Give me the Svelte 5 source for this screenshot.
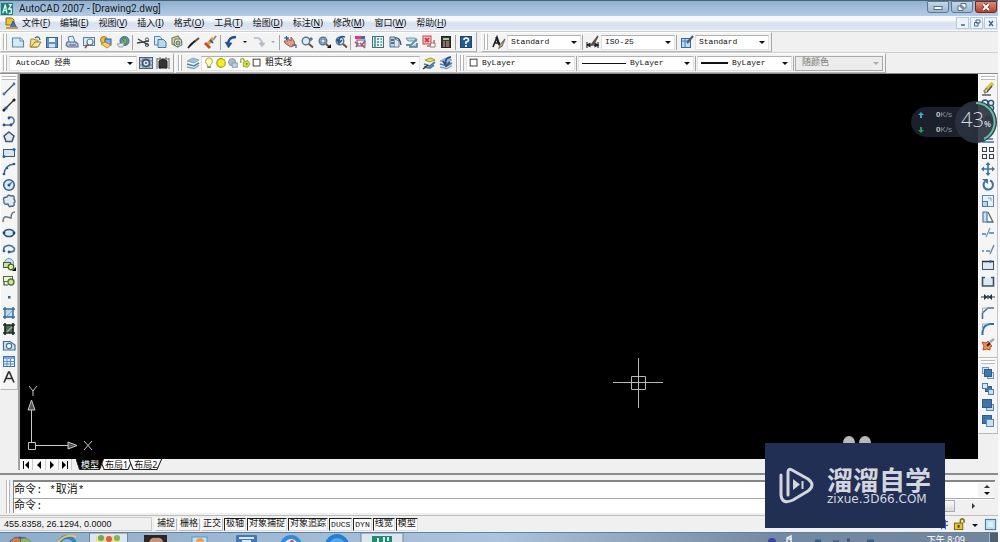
<script>
  const p = (d, stroke = '#2f5f93', w = 1.2, fill = 'none') =>
    `<path d="${d}" stroke="${stroke}" stroke-width="${w}" fill="${fill}"/>`;
  const r = (x, y, w, h, fill, stroke = 'none') =>
    `<rect x="${x}" y="${y}" width="${w}" height="${h}" fill="${fill}" stroke="${stroke}"/>`;
  const c = (x, y, rad, fill, stroke = 'none', w = 1) =>
    `<circle cx="${x}" cy="${y}" r="${rad}" fill="${fill}" stroke="${stroke}" stroke-width="${w}"/>`;

  const lens = c(6, 6, 3.8, '#dcebf7', '#5b7591', 1.4) + p('M9 9L13 12.5', '#6b4f3a', 2);
  const stack = p('M1 5L7 2L13 4L8 7Z', '#6f95bb', 0.7, '#9fc0dd') + p('M1 8L8 10L13 7', '#4f81ac', 1.5) + p('M1 11L8 12.5L13 9.5', '#7fa3c4', 1.4);

  const icons = {
    app: r(0, 0, 14, 14, '#1c7f71') + p('M2 12L5 2L7 12M3 9H6M9 2H12L9 7H12V12H9', '#e4fff6', 1.5),
    doc: p('M1 9V2H7L9 4V9Z', '#8b6a22', 1, '#f3c02f') + p('M5 12L8 5L12 12Z', '#2b59b0', 1, '#3f78d0') + p('M1 12H13', '#d39a22', 2),
    new: p('M1.5 3H9.5L12.5 6V12H1.5Z', '#5d8bab', 1.1, '#d3ebf7') + p('M9 3V6H12', '#5d8bab', 1, '#fff'),
    open: p('M2 12L3 4H6L7 5H10L9 12Z', '#a58a35', 1, '#f2df8e') + p('M3 12L7 7H13L10 12Z', '#94782a', 1, '#f7e8a0') + p('M7 3Q11 0 12 5', '#555', 1.3),
    save: r(1.5, 2.5, 11, 10, '#5c94c5', '#33658f') + r(4, 3, 6, 4, '#eef6fb') + r(4, 9, 6, 3.5, '#d7e3ec'),
    plot: p('M4 7L3 2L8 1L10 7', '#5a7fae', 1, '#e2edfa') + p('M2 7H11L13 9V12H3L1 10Z', '#56699b', 1.1, '#bccbe4') + p('M4 10H11', '#57688d', 1.2),
    preview: r(1.5, 2.5, 11, 8, '#d8e9f7', '#587ca3') + c(8, 7, 3, '#f1f8ff', '#5d7d9c', 1.2) + p('M6 9L3 13', '#8b6332', 1.8),
    publish: c(5, 5, 3.5, '#f0bf2c', '#97801f') + r(6, 4, 6, 6, '#7badf0', '#345b9a') + p('M2 9L8 13L12 10L6 7Z', '#a78328', 0.9, '#ffd25b'),
    web: c(8.5, 6, 4.5, '#5a95c9', '#316893') + p('M6 4L8 6L7 8L10 9L11 5L9 3Z', '#528b33', 1, '#78b64e') + p('M1 9L8 8L7 12H3Z', '#99a6ad', 1, '#e4e8ea'),
    cut: p('M2 4L12 10M1 8L13 6', '#38454e', 1.4) + c(11, 4.5, 1.6, 'none', '#45525c') + c(11, 10, 1.6, 'none', '#45525c'),
    copy: p('M1.5 1.5H7L9 4V10H1.5Z', '#5788ad', 1, '#d4e9f6') + p('M5 4.5H10.5L13 7V12.5H5Z', '#487a9f', 1, '#b7d9ed'),
    paste: p('M2 3L8 1L12 7L8 12L2 9Z', '#827f45', 1.1, '#ded899') + p('M5 4H11L12 10L7 12L4 9Z', '#5b7384', 1, '#e2edf2') + c(8, 8, 2, '#b5c77a', '#65763c'),
    brush: p('M12 3L7 7', '#6b4f38', 2.2) + p('M8 6L3 11L1 13L4 9Z', '#222', 1.6, '#444'),
    paint: p('M12 1L9 5', '#8c8a87', 2) + p('M9 3L4 9', '#dc9a42', 3.2) + p('M1 8L6 13', '#ba5626', 2.8) + p('M6 5L9 8', '#31628c', 1.8),
    undo: p('M12 2Q4 2 4 10', '#234f91', 2.4) + p('M1 7L4.5 13L8 8Z', '#234f91', 0.5, '#234f91'),
    redo: p('M2 3Q10 2 10 9', '#bbc1c8', 2) + p('M7 8L10 12L13 8Z', '#b3bbc4', 0.5, '#b3bbc4'),
    pan: p('M3 2L8 6V2L11 6L12 10L8 12L3 9L1 6H5Z', '#9e5547', 1, '#d8a08a') + p('M1 3H6M3.5 1V5M9 10H13V13', '#365c88', 1.2),
    zoom: lens + p('M11 2V6M9 4H13', '#38546f', 1),
    zoomwin: lens + p('M4 4H8V8H4Z', '#3e6899', 1) + p('M10 13H14V9Z', '#111', 0, '#111'),
    zoomprev: lens + p('M11 2Q5 0 5 6M3 4L5 8L8 5', '#23578f', 1.7),
    props: r(1, 1, 3, 3, '#d02bcc') + r(4, 1, 3, 3, '#ef4a32') + r(7, 1, 4, 3, '#3867d4') + r(3, 5, 8, 6, '#ece8f0', '#665c94') + p('M1 7L4 9L2 12M6 8L11 13M11 6L7 11', '#a45b6c', 1.6),
    design: r(1.5, 1.5, 11, 11, '#e8f3f3', '#3e7186') + p('M4 1V13M6 4H8M9.5 4H11M6 7H8M9.5 7H11M6 10H8M9.5 10H11', '#3d8b84', 1.5),
    palette: p('M2 2H7V12H2Z', '#4a7092', 1, '#b7d3e2') + p('M7 4L11 6V12H7', '#567696', 1, '#dfedf4') + p('M7 3Q12 2 13 10M3 5H6M3 8H6', '#344e6c', 1.3),
    sheet: p('M1 3H10L12 6H3Z', '#6f9db5', 1, '#b8d9e1') + p('M12 4L6 10H1', '#63949d', 2) + p('M4 12H12V8', '#4e79a5', 1.5, '#a9c9e2'),
    markup: r(1, 1, 8, 8, '#f4c2c2', '#c34850') + p('M3 3L7 7M7 3L3 7', '#d12c38', 1.6) + p('M5 11H12V5', '#c8636a', 1.5) + p('M9 8H13V12H8Z', '#95747b', 1, '#fff'),
    calc: r(2.5, 1.5, 9, 11, '#3f3535', '#272222') + r(4, 3, 6, 2, '#93d48a') + p('M4 7H6M7 7H10M4 9H6M7 9H10M4 11H6M7 11H10', '#d9a4a0', 1.1),
    help: r(1.5, 1.5, 11, 11, '#285b91', '#17456f') + p('M5 5Q5 3 7 3Q9.5 3 9.5 5Q9.5 6.5 7 7V9M7 10V12', '#fff', 1.6),
    textstyle: p('M1 12L5 2L8 11M3 8H8M4 2L7 10', '#222', 1.6) + p('M13 4L8 10L7 13L10 11Z', '#82745f', 1.2, '#e0d4bc'),
    dimstyle: p('M1 7V13M1 10H13M12 7V13M1 10L4 8.5V11.5ZM12 10L9 8.5V11.5Z', '#222', 1.1, '#222') + p('M12 1L5 10L8 9Z', '#5b5148', 1.4, '#333'),
    tabstyle: r(1.5, 3.5, 9, 9, '#bedcf4', '#356aa5') + p('M2 6H10M5 4V12', '#4b80b8', 1) + p('M13 1L7 8', '#4b5d70', 2.2),
    gear: r(0.5, 1.5, 13, 11, '#b8c8d7', '#476078') + p('M0 5H14M0 9H14M4 1V13M10 1V13', '#607b93', 1) + c(7, 7, 3.5, '#d9e5ee', '#3b536b', 1.8) + c(7, 7, 1, '#3b536b'),
    workspace: p('M1 2V13M4 1V13M10 1V13M13 2V13M1 3H13', '#676767', 1) + p('M3 5L7 3L11 5V12H3Z', '#222', 1, '#333'),
    layers: stack,
    bulb: p('M7 1Q11 1 11 5Q11 7 9 9V11H5V9Q3 7 3 5Q3 1 7 1Z', '#a39a3d', 1, '#fffbb3') + p('M5 12H9', '#6684a0', 1.8),
    sun: c(7, 7, 5, '#f1ed28', '#b3a519', 1.4),
    freeze: c(6, 6, 4.2, '#a9bfcb', '#7794a5') + r(6, 7, 6, 5, '#c3d4dc', '#7f98a5'),
    lock: p('M2 7V4Q2 2 4 2Q6 2 6 5', '#94a724', 1.5) + p('M5 6L10 4L13 8L10 12L5 11Z', '#8e9d22', 1, '#d5dc48') + c(9, 8, 1, '#65701b'),
    swatch: r(2.5, 2.5, 8, 8, '#fff', '#222'),
    layerprev: p('M3 4L9 2L13 4L7 6Z', '#a49a34', 1, '#e5de5c') + p('M2 8L8 10L13 6M2 11L8 12L12 9', '#4d7ea9', 1.8) + p('M1 13L6 9', '#333', 1.2),
    layerstate: stack + p('M12 1Q5 2 7 8M4 5L7 10L11 6', '#2c5084', 1.8),
    line: p('M2 12L12 2', '#3c4d5b', 1.3) + c(2, 12, 1.4, '#3e79b5') + c(12, 2, 1.4, '#3e79b5'),
    xline: p('M1 13L13 1', '#333', 1.4) + c(4, 10, 1.6, '#235e9b') + c(12, 2, 1.5, '#222') + c(2, 12, 1.5, '#222'),
    pline: p('M1 11H9M9 11Q14 8 11 4Q9 2 7 4', '#487199', 1.4) + c(2, 11, 1.4, '#1e5288') + c(7, 4, 1.4, '#1e5288') + c(9, 11, 1.4, '#1e5288'),
    polygon: p('M7 2L12 6L10 11.5H4L2 6Z', '#445a6d', 1.6, '#dceaf5'),
    rectangle: r(1.5, 3.5, 11, 7, '#d5e7f6', '#3e5870') + c(2, 10.5, 1.6, '#236aab') + c(12, 3.5, 1.6, '#236aab'),
    arc: p('M2 12Q3 3 12 2', '#4c6781', 1.4) + c(2, 12, 1.3, '#205c98') + c(5, 6, 1.3, '#205c98') + c(12, 2, 1.3, '#205c98'),
    circle: c(7, 7, 5.3, '#d9eaf7', '#36648d', 1.6) + p('M7 7L10 4', '#3f81bc', 1.4) + c(7, 7, 1.5, '#245d95'),
    cloud: p('M5 3Q6 0 9 2Q13 1 12 5Q14 8 12 9Q13 13 9 12Q7 14 6 10Q1 11 2 7Q0 3 5 3Z', '#506a83', 1.4, '#dfeaf4'),
    spline: p('M1 12Q1 6 5 7T9 8Q9 2 13 2', '#6c7680', 1.5),
    ellipse: '<ellipse cx="7" cy="7" rx="5" ry="3.5" fill="#dbeaf6" stroke="#285987" stroke-width="1.700"/>' + c(2, 7, 1.4, '#16456f') + c(12, 7, 1.4, '#16456f'),
    earc: p('M7 10Q14 10 12 6Q9 2 4 4Q1 5 2 9', '#4576a1', 1.7) + c(7, 10, 1.4, '#205c98') + c(2, 9, 1.3, '#205c98'),
    insert: c(7, 5, 4.5, '#c9dff0', '#6c94b3') + r(1.5, 4.5, 7, 5, '#cfe0a1', '#426228') + c(9, 9, 2.8, '#dae7b1', '#446b25', 1.3) + p('M10 13H14V9Z', '#111', 0, '#111'),
    block: r(1.5, 2.5, 9, 5, '#eff5d8', '#516d33') + c(9, 8, 3, '#cddf9b', '#4f742e', 1.3) + p('M2 8V11H6', '#345b37'),
    point: r(6, 6, 2.5, 2.5, '#33658f'),
    hatch: r(3.5, 3.5, 8, 8, '#b8daf2') + p('M3 1V13M11 1V13M1 3H13M1 11H13', '#356995', 1.4) + p('M5 10L10 5', '#7ba7cb', 1),
    gradient: r(3, 3, 8, 8, '#526656') + p('M3 1V13M11 1V13M1 3H13M1 11H13', '#202b28', 1.7) + p('M5 10L10 5', '#98ad9b', 1.6),
    region: p('M1.5 12V3.5H8L13 7V12Z', '#427098', 1.2, '#cde3f2') + c(7, 8, 2.6, '#fff', '#3e77a5', 1.2),
    table: r(1.5, 2.5, 11, 10, '#e6f1fb', '#3f75b8') + r(2, 3, 10, 2, '#7ca9e0') + p('M2 7.5H12M2 10H12M5 5V12M8.5 5V12', '#5b8dcb', 1),
    text: p('M2 12.5L6.6 2H7.4L12 12.5M4 8.5H10', '#2f2f2f', 1.7),
    erase: p('M12 1L5 8', '#d6c549', 4) + p('M11 4L6 10L3 11', '#4d4c45', 1.3) + p('M6 6L3 9L5 11', '#8d8676', 1.4, '#e8e2d0') + p('M1 13H10', '#444', 1.3),
    duplicate: c(4, 5, 3, '#d2e7f5', '#2c536d', 1.4) + c(10, 5, 2.6, '#dbecf7', '#2c536d', 1.4) + c(10, 10, 2.6, '#b9d6ea', '#315b80', 1.4),
    mirror: p('M6 2V12H1Z', '#315c84', 1.2) + p('M8 2V12H13Z', '#315c84', 1.2, '#c8dff0'),
    offset: p('M1 12H13M2 9H12', '#466fa8', 1.6),
    array: ['1.5 1.5', '8.5 1.5', '1.5 8.5', '8.5 8.5'].map((s) => { const [x, y] = s.split(' '); return r(x, y, 4, 4, '#f4f7fa', '#3a434b'); }).join(''),
    move: p('M7 2V12M2 7H12', '#3f79ae', 1.7) + p('M7 0L9.5 3H4.5ZM7 14L9.5 11H4.5ZM0 7L3 4.5V9.5ZM14 7L11 4.5V9.5Z', '#3f79ae', 0, '#3970a5'),
    rotate: p('M4 3.5A4.7 4.7 0 1 0 9 2.5', '#3e709b', 2) + p('M1 1H7V6Z', '#3e709b', 0, '#3e709b'),
    scale: r(1.5, 1.5, 11, 11, '#e6f1fa', '#5e88af') + r(1.5, 7.5, 5, 5, '#bad6ec', '#477aa7') + p('M7 4H10V7', '#7fa2c2', 1),
    stretch: p('M2 2V12H6V2Z', '#41719d', 1.1, '#cce1f1') + p('M7 2L12 12H6', '#526b80', 1.3),
    trim: p('M1 8H5M8 7H13', '#3c83bd', 1.5) + p('M5 11L9 2', '#7293ad', 1.2),
    extend: p('M1 9H3M5 9H9', '#4e86b4', 1.4) + p('M9 12L13 3', '#61829d', 1.3),
    breakpt: r(1.5, 3.5, 11, 8, '#dce9f4', '#42566a') + p('M1 3.500H13', '#27343d', 1.5) + c(9.5, 3.5, 1.3, '#2b6090'),
    breakln: p('M4 3.5H1.5V12H12.5V3.5H10', '#3d5266', 1.6, '#dce9f4'),
    join: p('M0 7H14M7 5V9', '#29343d', 1.2) + p('M6.5 7L3 4V10ZM7.5 7L11 4V10Z', '#29343d', 0, '#29343d'),
    chamfer: p('M1.5 13V7L7 2H13', '#4c6f8c', 1.6) + p('M1.5 7V2H7', '#93aabd', 1),
    fillet: p('M1.5 13V10Q2 3 9 2H13', '#316fa7', 2) + p('M1.5 8V2H7', '#93aabd', 1),
    explode: p('M1 4L5 5L7 3L9 6L11 8L9 9L9 12L6 11L2 12L3 8Z', '#c44320', 1, '#ec9650') + p('M6 8L9 5', '#222', 1.8) + p('M9 4L13 1', '#9aa7b2', 2.2),
    front: r(1.5, 1.5, 6, 6, '#d2e4f3', '#6e96b9') + r(6.5, 6.5, 6, 6, '#d2e4f3', '#6e96b9') + r(3.5, 3.5, 7, 7, '#3f76ad', '#315f8d'),
    back: r(4.5, 4.5, 6, 5, '#3f76ad', '#315f8d') + r(1.5, 1.5, 5, 5, '#d5e7f5', '#547fa7') + r(7.5, 7.5, 5, 5, '#c7dff0', '#547fa7'),
    above: r(5.5, 6.5, 7, 6, '#c2daee', '#5c86ad') + r(1.5, 1.5, 9, 8, '#3f74ab', '#2d5e90'),
    under: r(1.5, 1.5, 9, 8, '#3f74ab', '#2d5e90') + r(5.5, 5.5, 7, 7, '#c8e0f1', '#5c86ad'),
    tray: p('M2 4H12M2 8H12M5 2V12M9 2V12', '#3c62b4', 1.4),
    padlock: p('M8 6V3Q8 1 10 1Q12 1 12 4V5', '#8a7418', 1.8) + r(1.5, 5.5, 9, 7, '#e5c42d', '#775f0c') + r(5, 7.5, 2, 3, '#4d3c00'),
    clean: r(1.5, 1.5, 11, 11, '#b9ddf4', '#3e7198') + r(4, 4, 6, 6, '#d8effc')
  };

  const menus = [['文件', 'F'], ['编辑', 'E'], ['视图', 'V'], ['插入', 'I'], ['格式', 'O'], ['工具', 'T'], ['绘图', 'D'], ['标注', 'N'], ['修改', 'M'], ['窗口', 'W'], ['帮助', 'H']];
  const standard = [
    [['new', '新建'], ['open', '打开'], ['save', '保存']],
    [['plot', '打印'], ['preview', '打印预览'], ['publish', '发布'], ['web', '网上发布']],
    [['cut', '剪切'], ['copy', '复制'], ['paste', '粘贴'], ['brush', '特性匹配'], ['paint', '块编辑器']],
    [['undo', '放弃'], ['drop', '放弃列表'], ['redo', '重做'], ['dropoff', '重做列表']],
    [['pan', '实时平移'], ['zoom', '实时缩放'], ['zoomwin', '窗口缩放'], ['zoomprev', '缩放上一个']],
    [['props', '特性'], ['design', '设计中心'], ['palette', '工具选项板'], ['sheet', '图纸集'], ['markup', '标记集'], ['calc', '快速计算器']],
    [['help', '帮助']]
  ];
  const styles = [['textstyle', '文字样式', 'Standard'], ['dimstyle', '标注样式', 'ISO-25'], ['tabstyle', '表格样式', 'Standard']];
  const draw = [['line', '直线'], ['xline', '构造线'], ['pline', '多段线'], ['polygon', '正多边形'], ['rectangle', '矩形'], ['arc', '圆弧'], ['circle', '圆'], ['cloud', '修订云线'], ['spline', '样条曲线'], ['ellipse', '椭圆'], ['earc', '椭圆弧'], ['insert', '插入块'], ['block', '创建块'], ['point', '点'], ['hatch', '图案填充'], ['gradient', '渐变色'], ['region', '面域'], ['table', '表格'], ['text', '多行文字']];
  const modify = [['erase', '删除'], ['duplicate', '复制'], ['mirror', '镜像'], ['offset', '偏移'], ['array', '阵列'], ['move', '移动'], ['rotate', '旋转'], ['scale', '缩放'], ['stretch', '拉伸'], ['trim', '修剪'], ['extend', '延伸'], ['breakpt', '打断于点'], ['breakln', '打断'], ['join', '合并'], ['chamfer', '倒角'], ['fillet', '圆角'], ['explode', '分解']];
  const order = [['front', '前置'], ['back', '后置'], ['above', '置于对象之上'], ['under', '置于对象之下']];
  const tabs = ['模型', '布局1', '布局2'];
  let tab = $state('模型');
  let modes = $state([['捕捉', false], ['栅格', false], ['正交', false], ['极轴', true], ['对象捕捉', true], ['对象追踪', true], ['DUCS', true], ['DYN', true], ['线宽', true], ['模型', true]]);
</script>

{#snippet icon(name)}
  <svg class="icon" viewBox="0 0 14 14" aria-hidden="true">{@html icons[name]}</svg>
{/snippet}

{#snippet tool([name, label])}
  {#if name.startsWith('drop')}
    <button class="tool narrow" class:off={name === 'dropoff'} aria-label={label}><i class="tri"></i></button>
  {:else}
    <button class="tool" aria-label={label}>{@render icon(name)}</button>
  {/if}
{/snippet}

<div class="window">
  <header class="titlebar">
    {@render icon('app')}
    <h1>AutoCAD 2007 - [Drawing2.dwg]</h1>
    <div class="winbtns">
      <button aria-label="最小化"><svg viewBox="0 0 20 10"><rect x="6" y="4.500" width="8" height="3" fill="#fff" stroke="#546b84"/></svg></button>
      <button aria-label="还原"><svg viewBox="0 0 20 10"><path d="M9 1.500H14V6H9ZM6 4H11V8.500H6Z" fill="#fff" stroke="#546b84"/></svg></button>
      <button class="close" aria-label="关闭"><svg viewBox="0 0 20 10"><path d="M7 2L13 8M13 2L7 8" stroke="#6b3029" stroke-width="3.500"/><path d="M7 2L13 8M13 2L7 8" stroke="#fff" stroke-width="2"/></svg></button>
    </div>
  </header>

  <nav class="menubar">
    {@render icon('doc')}
    {#each menus as [name, key]}
      <button>{name}(<u>{key}</u>)</button>
    {/each}
    <div class="docbtns">
      <button aria-label="最小化文档"><svg viewBox="0 0 10 10"><path d="M3 7H7" stroke="#45688d" stroke-width="1.500"/></svg></button>
      <button aria-label="还原文档"><svg viewBox="0 0 10 10"><path d="M4 2H8V5H4ZM2.500 4.500H6V8H2.500Z" fill="#e9f0f8" stroke="#45688d"/></svg></button>
      <button aria-label="关闭文档"><svg viewBox="0 0 10 10"><path d="M3 3L7 8M7 3L3 8" stroke="#45688d" stroke-width="1.500"/></svg></button>
    </div>
  </nav>

  <div class="bars">
    <div class="bar std">
      <i class="grip"></i>
      {#each standard as group, n}
        {#if n}<i class="sep"></i>{/if}
        {#each group as t}{@render tool(t)}{/each}
      {/each}
    </div>
    <div class="bar stylebar">
      <i class="grip"></i>
      {#each styles as [name, label, value], n}
        {#if n}<i class="sep"></i>{/if}
        {@render tool([name, label])}
        <label class="combo w-style"><select aria-label={label}><option>{value}</option></select></label>
      {/each}
    </div>
  </div>

  <div class="bars">
    <div class="bar">
      <i class="grip"></i>
      <label class="combo w-space"><select aria-label="工作空间"><option>AutoCAD 经典</option></select></label>
      {@render tool(['gear', '工作空间设置'])}
      {@render tool(['workspace', '我的工作空间'])}
    </div>
    <div class="bar layerbar">
      <i class="grip"></i>
      {@render tool(['layers', '图层特性管理器'])}
      <label class="combo w-layer">
        {#each ['bulb', 'sun', 'freeze', 'lock', 'swatch'] as n}{@render icon(n)}{/each}
        <select class="cjk" aria-label="图层"><option>粗实线</option></select>
      </label>
      {@render tool(['layerprev', '上一个图层'])}
      {@render tool(['layerstate', '图层状态'])}
    </div>
    <div class="bar">
      <i class="grip"></i>
      <label class="combo w-color">{@render icon('swatch')}<select aria-label="颜色"><option>ByLayer</option></select></label>
      <i class="sep"></i>
      <label class="combo w-type"><i class="sample thin"></i><select aria-label="线型"><option>ByLayer</option></select></label>
      <i class="sep"></i>
      <label class="combo w-weight"><i class="sample thick"></i><select aria-label="线宽"><option>ByLayer</option></select></label>
      <i class="sep"></i>
      <label class="combo w-plot disabled"><select class="cjk" aria-label="打印样式" disabled><option>随颜色</option></select></label>
    </div>
  </div>

  <main>
    <div class="dock">
      <div class="vbar">
        <i class="vgrip"></i>
        {#each draw as t}{@render tool(t)}{/each}
      </div>
    </div>
    <div class="drawing">
      <div class="canvas">
        <svg class="ucs" viewBox="0 0 80 80" role="img" aria-label="UCS">
          <g fill="none" stroke="#c9c9c9">
            <path d="M8.500 68.500H15.500V75.500H8.500ZM11.500 68V32M16 71.500H48"/>
            <path d="M11.500 26L15 36H8ZM57 71.500L48 68V75Z" fill="#555"/>
            <path d="M9 12L13 17L17 12M13 17V22M64 67L72 76M72 67L64 76"/>
          </g>
        </svg>
        <svg class="cursor" viewBox="0 0 50 50" aria-hidden="true">
          <path d="M25.500 0V50M0 24.500H50M18.500 18.500H32.500V31.500H18.500Z" fill="none" stroke="#b8b8b8"/>
        </svg>
      </div>
      <div class="tabs">
        <button class="step" aria-label="第一个"><svg viewBox="0 0 12 10"><path d="M3 1V9H4V1ZM9 1V9L5 5Z"/></svg></button>
        <button class="step" aria-label="上一个"><svg viewBox="0 0 12 10"><path d="M8 1V9L4 5Z"/></svg></button>
        <button class="step" aria-label="下一个"><svg viewBox="0 0 12 10"><path d="M4 1V9L8 5Z"/></svg></button>
        <button class="step" aria-label="最后一个"><svg viewBox="0 0 12 10"><path d="M3 1V9L7 5ZM8 1V9H9V1Z"/></svg></button>
        {#each tabs as name}
          <button class="tab" class:active={tab === name} onclick={() => (tab = name)}>
            <svg viewBox="0 0 32 11" preserveAspectRatio="none" aria-hidden="true"><path d="M0 0L4 10.500H27L31.500 0"/></svg>{name}
          </button>
        {/each}
      </div>
    </div>
    <div class="dock right">
      <div class="vbar">
        <i class="vgrip"></i>
        {#each modify as t}{@render tool(t)}{/each}
      </div>
      <div class="vbar">
        <i class="vgrip"></i>
        {#each order as t}{@render tool(t)}{/each}
      </div>
    </div>
    <aside class="netmeter">
      <div class="rates">
        <span><svg viewBox="0 0 6 6"><path d="M3 0L6 3H4V6H2V3H0Z" fill="#3ea5cf"/></svg><b>0</b>K/s</span>
        <span><svg viewBox="0 0 6 6"><path d="M3 6L6 3H4V0H2V3H0Z" fill="#2c9a48"/></svg><b>0</b>K/s</span>
      </div>
      <div class="dial">
        <svg viewBox="0 0 42 42" aria-hidden="true"><path d="M21 2A19 19 0 0 1 29 38" fill="none" stroke="#62c3a4" stroke-width="2"/></svg>
        <span>43<small>%</small></span>
      </div>
    </aside>
  </main>

  <section class="command">
    <i class="grip"></i>
    <div class="console">
      <div class="line history"><p>命令: *取消*</p><div class="vscroll"><i class="tri up"></i><i class="tri"></i></div></div>
      <div class="line">
        <label for="cmd">命令:</label><input id="cmd" type="text" />
        <div class="hscroll"><i class="thumb"></i><i class="tri next"></i></div>
      </div>
    </div>
  </section>

  <footer class="status">
    <output>455.8358, 26.1294, 0.0000</output>
    {#each modes as mode}
      <button class:on={mode[1]} class:latin={mode[0].startsWith('D')} aria-pressed={mode[1]} onclick={() => (mode[1] = !mode[1])}>{mode[0]}</button>
    {/each}
    <div class="tray">{@render icon('tray')}{@render icon('padlock')}<i class="tri"></i>{@render icon('clean')}</div>
  </footer>

  <div class="taskbar">
    <svg class="tasks" viewBox="0 0 420 10" aria-hidden="true">
      <circle cx="20" cy="17" r="14" fill="#44678a" stroke="#8eabc6" /><path d="M11 8Q15 3 20 6V10H11Z" fill="#df7446"/><path d="M21 6Q26 4 30 8V10H21Z" fill="#8bb45c"/>
      <circle cx="67" cy="12" r="8" fill="none" stroke="#3181ca" stroke-width="4"/><path d="M58 9Q66 0 76 4" fill="none" stroke="#e9c64a" stroke-width="2"/>
      <rect x="89.500" y="0" width="38" height="12" fill="#dde7ef" stroke="#6f879d"/><path d="M96 3H120V10H96Z" fill="#ebdca0"/><circle cx="101" cy="5" r="3" fill="#72a953"/><circle cx="109" cy="6" r="3" fill="#d75e4a"/><circle cx="117" cy="5" r="3" fill="#7fb55f"/>
      <rect x="144" y="2" width="23" height="8" fill="#2c2524"/><path d="M149 10Q150 4 156 5Q163 4 163 10Z" fill="#c5937c"/>
      <rect x="192" y="4" width="15" height="6" fill="#c9e1f2" stroke="#5199cb"/><circle cx="200" cy="9" r="4" fill="#e8a062"/>
      <rect x="236" y="2" width="21" height="8" rx="1" fill="#3f78bd"/><path d="M239 5H254M242 8H251" stroke="#d9eafa" stroke-width="2"/>
      <circle cx="291" cy="13" r="9" fill="#e1eaf2" stroke="#348bd7" stroke-width="4"/><circle cx="292" cy="9" r="2" fill="#dd4747"/>
      <circle cx="337" cy="13" r="10" fill="#5ba6e6" stroke="#247fd6" stroke-width="4"/>
      <rect x="361" y="0" width="42" height="12" fill="#dbe6ef" stroke="#6f879d"/><rect x="372" y="3" width="20" height="7" fill="#238773"/><path d="M378 10V5M384 4V10M388 4V8" stroke="#d5f1e9" stroke-width="2"/>
    </svg>
    <div class="notify">
      <svg viewBox="0 0 120 10" aria-hidden="true"><circle cx="5" cy="9" r="4" fill="#3444ab"/><path d="M20 10V5L24 3V10M21 6H25" fill="none" stroke="#eee" stroke-width="1.500"/><path d="M48 8H54M66 9H72M80 7H83M100 8H107" stroke="#3c5c7f" stroke-width="3"/></svg>
      <time>下午 8:09</time>
      <i class="peek"></i>
    </div>
  </div>

  <div class="ears"><i></i><i></i></div>
  <div class="brand">
    <svg viewBox="0 0 36 38" aria-hidden="true">
      <path d="M9 28V5Q9 1 13 3L29 12Q37 18 29 24L14 33Q3 38 2 28V8" fill="none" stroke="#d3d6de" stroke-width="3" stroke-linecap="round"/>
      <path d="M14 12L21 17.500L14 23Z" fill="#d3d6de"/><path d="M23.500 14V22" stroke="#d3d6de" stroke-width="2"/>
    </svg>
    <div><strong>溜溜自学</strong><span>zixue.3D66.COM</span></div>
  </div>
</div>

<style>
  :global(body) { margin: 0; }
  .window {
    position: relative;
    display: flex;
    flex-direction: column;
    min-height: 100vh;
    box-sizing: border-box;
    overflow: hidden;
    background: #f0f0f0;
    border-right: 2px solid #fafafa;
    color: #111;
    font: 9px/12px "Noto Sans", "Noto Sans CJK SC", sans-serif;
  }
  button { border: 0; margin: 0; padding: 0; background: none; color: inherit; font: inherit; display: flex; align-items: center; justify-content: center; }
  i { flex: none; }
  svg { display: block; flex: none; }
  .icon { width: 14px; height: 14px; }
  .tri { width: 0; height: 0; border: 3px solid transparent; border-top-color: #111; border-bottom: 0; }
  .tri.up { border-top: 0; border-bottom: 3px solid #333; }
  .tri.next { border: 3px solid transparent; border-left-color: #333; border-right: 0; }

  .titlebar { display: flex; align-items: center; gap: 6px; height: 16px; padding-left: 1px; box-sizing: border-box; border-top: 1px solid #4d6275; background: linear-gradient(#92b0cf, #b4cce5); }
  .titlebar .icon { width: 12px; height: 12px; }
  h1 { flex: 1; margin: 0; font: 10px/14px Roboto, "Noto Sans", sans-serif; color: #151c26; }
  .winbtns { display: flex; gap: 2px; align-self: flex-start; padding-right: 1px; }
  .winbtns button { width: 22px; height: 12px; box-sizing: border-box; border: 1px solid #5e7894; border-radius: 0 0 3px 3px; background: linear-gradient(#c4d6e8, #9db8d2); }
  .winbtns svg { width: 20px; height: 10px; }
  .winbtns .close { background: linear-gradient(#dd8d7b, #bd3f27); border-color: #6d2b23; }

  .menubar { display: flex; align-items: center; gap: 10px; height: 14px; padding-left: 5px; background: linear-gradient(#f6f8fc 30%, #d8e0f1 50%, #dfe6f4); border-bottom: 1px solid #f8f8f8; }
  .menubar .icon { margin-right: -7px; }
  .menubar button { white-space: nowrap; }
  .docbtns { display: flex; gap: 1px; margin-left: auto; padding-right: 1px; }
  .docbtns button { width: 13px; height: 12px; box-sizing: border-box; border: 1px solid #b7cbe0; background: #edf3fa; }
  .docbtns svg { width: 10px; height: 10px; }

  .bars { display: flex; height: 20px; border-top: 1px solid #d0d0d0; }
  .bar { display: flex; align-items: center; padding: 0 2px; box-sizing: border-box; border: 1px solid; border-color: #fff #a8a8a8 #b5b5b5 #fff; background: #f3f3f3; }
  .grip { width: 2px; height: 16px; margin: 0 2px 0 0; border: solid #b4b4b4; border-width: 0 1px; background: #fff; }
  .sep { width: 1px; height: 15px; margin: 0 1px; background: #a5a5a5; }
  .tool { width: 17px; height: 16px; flex: none; }
  .tool.narrow { width: 11px; }
  .tool.narrow .tri { border-width: 2px 2px 0; }
  .off .tri { border-top-color: #aaa; }
  .stylebar { margin-left: 4px; }
  .layerbar { margin-left: 1px; }
  .combo { display: flex; align-items: center; height: 15px; box-sizing: border-box; padding: 0 3px 0 1px; border: 1px solid #e2e2e2; border-top-color: #b0b0b0; background: #fff; }
  .combo::after { content: ""; border: 3px solid transparent; border-top-color: #111; border-bottom: 0; }
  .combo .icon { width: 12px; height: 12px; }
  select { flex: 1; min-width: 0; appearance: none; border: 0; margin: 0; padding: 0 0 0 2px; background: none; color: #111; font: 8px/12px "Liberation Mono", "Noto Sans CJK SC", monospace; opacity: 1; }
  select.cjk { font-size: 9px; }
  .w-style { width: 74px; }
  .w-space { width: 128px; padding-left: 4px; }
  .w-layer { width: 219px; }
  .w-color { width: 109px; }
  .w-type { width: 116px; }
  .w-weight { width: 95px; }
  .w-plot { width: 88px; padding-left: 4px; }
  .disabled { background: #ececec; border-color: #a9a9a9; }
  .disabled select { color: #777; }
  .disabled::after { border-top-color: #aaa; }
  .sample { margin: 0 2px; background: #111; }
  .thin { width: 44px; height: 1px; }
  .thick { width: 27px; height: 2px; }

  main { position: relative; flex: 1; display: flex; border-top: 1px solid #8a8a8a; }
  .dock { width: 18px; flex: none; border-right: 2px solid #a0a0a0; }
  .dock.right { width: 20px; border-right: 0; }
  .vbar { display: flex; flex-direction: column; align-items: center; padding-bottom: 4px; border: 1px solid; border-color: #fff #c4c4c4 #b8b8b8 #fff; background: #f5f5f5; }
  .vgrip { width: 14px; height: 2px; margin: 1px 0; border: solid #bbb; border-width: 1px 0; background: #fff; }
  .dock .icon { width: 14px; height: 14px; }
  .drawing { flex: 1; display: flex; flex-direction: column; min-width: 0; }
  .canvas { position: relative; flex: 1; background: #000; }
  .ucs { position: absolute; left: 0; bottom: 5px; width: 80px; height: 80px; }
  .cursor { position: absolute; left: 62%; bottom: 51px; width: 50px; height: 50px; margin-left: -1px; }
  .tabs { display: flex; height: 11px; }
  .step { width: 13px; background: #f8f8f8; border-right: 1px solid #ccc; box-sizing: border-box; }
  .step svg { width: 12px; height: 10px; }
  .tab { position: relative; padding: 0 5px; margin-right: -4px; isolation: isolate; white-space: nowrap; line-height: 11px; }
  .step + .tab { margin-left: 4px; }
  .tab svg { position: absolute; z-index: -1; inset: 0; width: 100%; height: 100%; }
  .tab path { fill: #fff; stroke: #222; }
  .tab.active { color: #fff; z-index: 1; }
  .tab.active path { fill: #000; }

  .netmeter { position: absolute; right: 1px; top: 26px; display: flex; align-items: center; height: 44px; font: 8px/15px "Liberation Sans", sans-serif; color: #8c929b; }
  .rates { display: flex; flex-direction: column; width: 62px; margin-right: -18px; padding: 0 0 0 5px; box-sizing: border-box; border-radius: 15px 0 0 15px; background: #1b202c; }
  .rates span { display: flex; align-items: center; }
  .rates svg { width: 6px; height: 6px; margin: 0 12px 0 2px; }
  .rates b { color: #c6cbd2; }
  .dial { position: relative; width: 42px; height: 42px; border-radius: 50%; background: rgb(45 50 64 / 92%); display: flex; align-items: center; justify-content: center; }
  .dial svg { position: absolute; inset: 0; }
  .dial span { color: #d7dbe1; font: 300 20px/24px "Open Sans", Lato, sans-serif; white-space: nowrap; }
  .dial small { font-size: 8px; font-weight: 600; }

  .command { display: flex; margin-top: 3px; padding: 5px 3px 2px; border-top: 2px solid #8b8b8b; }
  .command .grip { height: auto; margin: 0 3px; }
  .console { flex: 1; border: solid #858585; border-width: 2px 0 0 1px; background: #fff; font: 11px/14px "Liberation Mono", "Noto Sans CJK SC", monospace; }
  .line { display: flex; align-items: center; height: 14px; }
  .history { height: 16px; border-bottom: 1px solid #aaa; }
  .line p { margin: 0; flex: 1; }
  input { flex: 1; min-width: 0; height: 12px; box-sizing: border-box; border: 0; padding: 0; outline: 0; background: none; font: inherit; }
  .vscroll { width: 17px; height: 14px; display: flex; flex-direction: column; align-items: center; justify-content: space-around; background: #f3f3f3; }
  .hscroll { width: 172px; height: 13px; display: flex; align-items: center; justify-content: space-between; padding-right: 20px; background: #f0f0f0; }
  .thumb { width: 150px; height: 10px; border: 1px solid #aaa; background: linear-gradient(#fafafa, #d9d9d9); }

  .status { display: flex; align-items: center; gap: 1px; height: 16px; border-top: 1px solid #bdbdbd; }
  output { width: 147px; padding-left: 4px; margin-right: 2px; border: solid #ccc; border-width: 1px 1px 1px 0; font: 9px/12px "Liberation Sans", sans-serif; }
  .status button { height: 13px; padding: 0 1px; border: 1px solid; border-color: #fff #bbb #bbb #fff; background: #f5f5f5; font: 9px/11px "Liberation Mono", "Noto Sans CJK SC", monospace; box-sizing: border-box; white-space: nowrap; }
  .status button.on { border-color: #222 #ddd #ddd #222; background: #fafafa; }
  .status button.latin { font-size: 8px; }
  .tray { display: flex; align-items: center; gap: 3px; margin-left: auto; padding-right: 1px; }
  .tray .tri { margin: 3px 3px 0; }
  .tray .icon { width: 13px; height: 13px; }

  .taskbar { display: flex; justify-content: space-between; height: 10px; overflow: hidden; border-top: 1px solid #67809a; box-sizing: border-box; background: linear-gradient(90deg, #8faecb, #a9c4de 50%, #7189a3 78%, #71869c); }
  .tasks { width: 420px; height: 10px; }
  .notify { display: flex; gap: 40px; color: #fff; font-size: 9px; line-height: 14px; }
  .notify svg { width: 120px; height: 10px; }
  .peek { width: 8px; background: #4e5f71; border-left: 1px solid #a7b5c3; margin-left: -16px; }

  .ears { position: absolute; right: 127px; bottom: 92px; display: flex; gap: 4px; }
  .ears i { width: 12px; height: 14px; border-radius: 50%; background: #b9b9b9; }
  .brand { position: absolute; right: 53px; bottom: 14px; width: 180px; height: 85px; box-sizing: border-box; padding-left: 14px; display: flex; align-items: center; gap: 12px; background: #222f55; color: #d3d6de; }
  .brand svg { width: 36px; height: 38px; }
  .brand div { display: flex; flex-direction: column; }
  .brand strong { font: 700 26px/26px "Noto Sans CJK SC", sans-serif; }
  .brand span { font: 12px/14px "DejaVu Sans", sans-serif; }
</style>
